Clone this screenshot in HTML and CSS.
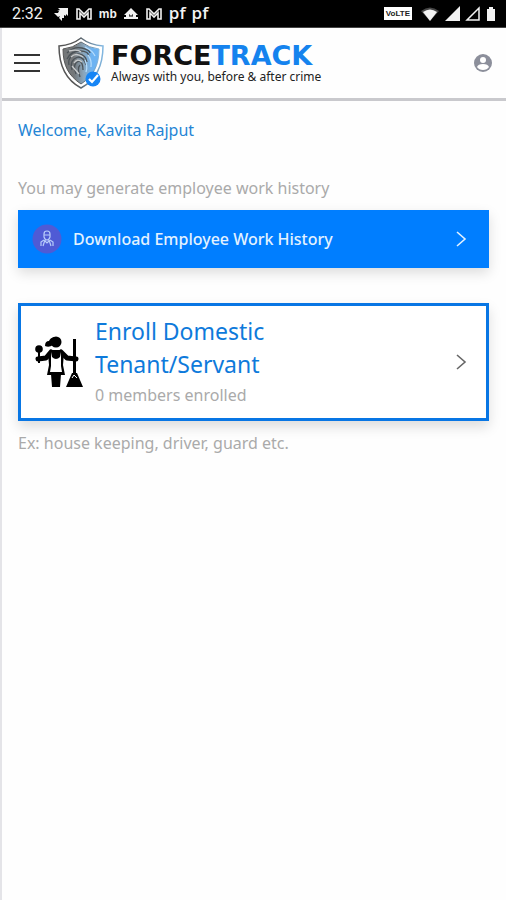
FILE: index.html
```html
<!DOCTYPE html>
<html lang="en">
<head>
<meta charset="utf-8">
<meta name="viewport" content="width=device-width, initial-scale=1">
<title>ForceTrack</title>
<link rel="stylesheet" href="styles.css">
</head>
<body>
<svg class="defs" aria-hidden="true">
  <symbol id="mail" viewBox="0 0 18 14"><path d="M5 12H2V2h2l5 5 5-5h2v10h-3V6l-4 4-4-4z" fill="none" stroke="currentColor" stroke-width="1.6"/></symbol>
  <symbol id="chevron" viewBox="0 0 12 18"><path d="M2 2l8 7-8 7" fill="none" stroke="currentColor" stroke-width="1.6"/></symbol>
</svg>
<div class="status">
  <div class="notices">
    <span class="time">2:32</span>
    <svg width="16" height="16" viewBox="0 0 16 16" fill="currentColor"><path d="M5 2h10v8l-2-2v2l-2-1v3H9v3l-3-3 1-2-2 1-4-4h4l1-2H4l3-1z"/></svg>
    <svg width="18" height="14"><use href="#mail"/></svg>
    <span class="mb">mb</span>
    <svg width="16" height="14" viewBox="0 0 16 14"><path d="M8 1l7 7h-2v2h2v2H1v-2h2V8H1z" fill="currentColor"/><path d="M6 8h1v2M10 8H9v2" stroke="#000" fill="none"/></svg>
    <svg width="18" height="14"><use href="#mail"/></svg>
    <span class="pf">pf</span>
    <span class="pf">pf</span>
  </div>
  <div class="signals">
    <span class="volte">VoLTE</span>
    <svg width="20" height="16" viewBox="0 0 20 16"><path d="M1 5Q10-2 19 5L10 15z" fill="#444"/><path d="M3 6q7-5 14 0l-7 9z" fill="currentColor"/></svg>
    <svg width="16" height="16" viewBox="0 0 16 16"><path d="M16 0v15H1z" fill="currentColor"/></svg>
    <svg width="16" height="16" viewBox="0 0 16 16"><path d="M15 2v12H3z" fill="none" stroke="currentColor" stroke-width="1.5"/></svg>
    <svg class="battery" width="10" height="16" viewBox="0 0 10 16"><path d="M3 1h4v2h2v12H1V3h2z" fill="currentColor"/></svg>
  </div>
</div>
<div class="screen">
  <header class="header">
    <button class="plain" aria-label="Menu"><svg width="28" height="20" viewBox="0 0 28 20"><path d="M1 2h26M1 10h26M1 18h26" stroke="#333" stroke-width="2"/></svg></button>
    <a class="brand" href="#">
      <svg width="48" height="54" viewBox="0 0 48 54">
        <defs>
          <linearGradient id="steel"><stop offset=".3" stop-color="#747779"/><stop offset=".58" stop-color="#8ba7bd"/><stop offset=".8" stop-color="#6db3f2"/></linearGradient>
          <linearGradient id="rim"><stop offset=".4" stop-color="#555"/><stop offset="1" stop-color="#82b8e2"/></linearGradient>
        </defs>
        <path d="M24 2q9 7 22 8c0 20-7 34-22 42C9 44 2 30 2 10q13-1 22-8z" fill="#fff" stroke="url(#rim)" stroke-width="1.5"/>
        <path d="M24 6q8 6 18 7c0 17-6 27-18 35C12 40 6 30 6 13q10-1 18-7z" fill="url(#steel)" stroke="url(#rim)"/>
        <g fill="none" stroke-width="1.3">
          <path d="M10 17q7-7 15-5t8 5M10 23q4-8 13-8t9 6M12 29q-2-10 10-11 7 1 8 8M15 34q-3-10 6-13 6 0 8 8M19 38q-4-11 3-13 4 1 4 9M23 41q-3-9 0-12" stroke="#4c5358"/>
          <path d="M12 15q9-2 12 1M14 21q5-5 12 0M17 27q3-5 8-1M15 30l7 8" stroke="#c8cbcc"/>
          <path d="M28 11q8 4 10 9M31 19q4 5 3 12M28 24q3 7 1 12" stroke="#b6ddfc"/>
        </g>
        <circle cx="36" cy="43" r="7.5" fill="#1685f5"/><path d="M32 43l3 3 6-7" fill="none" stroke="#fff" stroke-width="2.2"/>
      </svg>
      <span class="words"><span class="name">FORCE<span class="track">TRACK</span></span><span class="tagline">Always with you, before &amp; after crime</span></span>
    </a>
    <button class="plain account" aria-label="Account"><svg width="20" height="20" viewBox="0 0 20 20"><circle cx="10" cy="10" r="9" fill="#8c8f9b"/><circle cx="10" cy="7" r="3" fill="#fff"/><path d="M4 14q1-3 6-3t6 3q-2 3-6 3t-6-3z" fill="#fff"/></svg></button>
  </header>
  <main class="content">
    <p class="welcome">Welcome, Kavita Rajput</p>
    <p class="hint">You may generate employee work history</p>
    <button class="download">
      <svg width="30" height="30" viewBox="0 0 30 30"><circle cx="15" cy="15" r="14.5" fill="#4f5bd5"/><g fill="none" stroke="#b9cdfa" stroke-width="1.2"><path d="M12 10q0-3 3-3t3 3v3q-1 3-3 3t-3-3zM12 11h6M12 16l-3 2v4M18 16l3 2v4M13 16l-2 6M17 16l2 6M13 17l2 2 2-2"/></g></svg>
      <span>Download Employee Work History</span>
      <svg class="arrow" width="12" height="18"><use href="#chevron"/></svg>
    </button>
    <a class="enroll" href="#">
      <svg class="maid" width="50" height="52" viewBox="0 0 50 52">
        <circle cx="22" cy="6" r="5.5"/><path d="M20 1q-4 1-5 4-4 0-4 5 4 2 8-1z"/>
        <circle cx="5" cy="13" r="3.8"/>
        <path d="M5 14v13" fill="none" stroke="#000" stroke-width="2"/>
        <path d="M17 16l-5 6-8 1M27 16l6 6 9 1" fill="none" stroke="#000" stroke-width="5" stroke-linecap="round" stroke-linejoin="round"/>
        <path d="M17 14h10l3 3-1 12 2 10H13l2-10-1-12z"/>
        <path d="M18 16v5q4 4 8 0v-5l1 5v9l1 6H16l1-6v-9z" fill="#fff"/>
        <path d="M17 38h10l-1 13h-8zM39 3h3v35h-3zM38 37h5l6 14H32z"/>
        <path d="M38 42l2-3 3 3" fill="none" stroke="#fff"/>
      </svg>
      <span class="details"><span class="title">Enroll Domestic Tenant/Servant</span><span class="count">0 members enrolled</span></span>
      <svg class="arrow" width="12" height="18"><use href="#chevron"/></svg>
    </a>
    <p class="example">Ex: house keeping, driver, guard etc.</p>
  </main>
</div>
</body>
</html>
```
FILE: styles.css
```css
* { box-sizing: border-box; }
body {
  margin: 0;
  min-height: 100vh;
  display: flex;
  flex-direction: column;
  background: #fefefe;
  font-family: "Noto Sans", sans-serif;
  font-size: 16px;
}
p { margin: 0; }
svg { display: block; flex-shrink: 0; }
a { color: inherit; text-decoration: none; }
.defs { position: absolute; width: 0; height: 0; }
.status {
  height: 28px;
  padding: 0 10px 0 12px;
  display: flex;
  align-items: center;
  justify-content: space-between;
  background: #000;
  border-bottom: 1px solid #444;
  color: #f2f2f2;
}
.notices { display: flex; align-items: center; gap: 6px; }
.signals { display: flex; align-items: center; gap: 4px; }
.time { font-family: Roboto, sans-serif; font-size: 16px; margin-right: 4px; }
.mb { font: bold 12px "Liberation Sans", sans-serif; }
.pf { font: 600 17px/20px "Open Sans", sans-serif; padding-bottom: 2px; }
.volte {
  padding: 0 2px;
  margin-right: 4px;
  background: #fff;
  color: #222;
  font: bold 8px/13px "Liberation Sans", sans-serif;
}
.battery { margin-left: 2px; }
.screen { flex: 1; border-left: 2px solid #e4e4e8; }
.header {
  height: 73px;
  padding: 0 13px 0 11px;
  display: flex;
  align-items: center;
  border-bottom: 3px solid #c9c9cd;
}
.plain { padding: 0; border: 0; background: none; }
.account { margin-left: auto; }
.brand { display: flex; align-items: center; gap: 6px; margin-left: 16px; }
.words { display: flex; flex-direction: column; }
.name { font: bold 27px/28px "DejaVu Sans", sans-serif; color: #111; }
.track { color: #1583ee; }
.tagline { font: 12px/14px "Noto Sans", sans-serif; color: #222; }
.content { padding: 17px 17px 16px 16px; }
.welcome { line-height: 24px; color: #2485d5; }
.hint { margin-top: 34px; line-height: 24px; color: #aaa; }
.download {
  width: 100%;
  height: 58px;
  margin-top: 10px;
  padding: 0 22px 0 14px;
  display: flex;
  align-items: center;
  gap: 11px;
  border: 0;
  background: #007eff;
  box-shadow: 0 5px 12px #0002;
  color: #e3f2ff;
  font: 500 16px "Noto Sans", sans-serif;
}
.arrow { margin-left: auto; }
.enroll {
  margin-top: 35px;
  padding: 9px 19px 9px 13px;
  display: flex;
  align-items: center;
  gap: 11px;
  border: 3px solid #0876e4;
  background: #fff;
  box-shadow: 0 6px 12px #0002;
  color: #666;
}
.maid { fill: #000; }
.details { max-width: 220px; display: flex; flex-direction: column; }
.title { font-size: 23px; line-height: 33px; color: #0e7adb; }
.count { line-height: 28px; color: #aaa; }
.example { margin-top: 10px; line-height: 24px; color: #aaa; }
```
